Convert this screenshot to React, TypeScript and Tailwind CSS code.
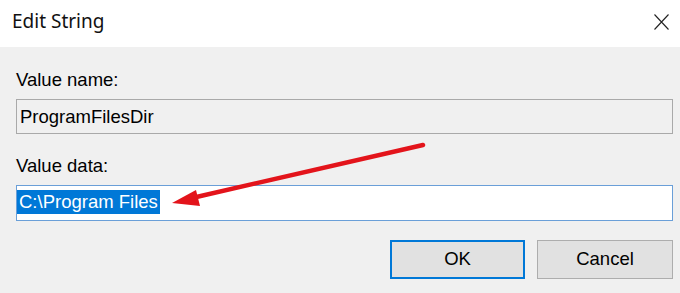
import React from 'react';

export default function App() {
  return (
    <div className="relative w-[680px] h-[293px] overflow-hidden bg-[#f0f0f0] font-['Liberation_Sans',Arial,sans-serif] text-black">
      {/* title bar */}
      <div className="flex items-start justify-between h-[47px] bg-white pl-[12px] pr-[11px]">
        <span className="mt-[8px] text-[19px] leading-[26px] font-['Noto_Sans','Open_Sans',sans-serif] text-[#111]">Edit String</span>
        <svg className="mt-[14px]" width="15" height="16" viewBox="0 0 15 16">
          <path d="M0.5 0.5 L14.5 15.5 M14.5 0.5 L0.5 15.5" stroke="#222" strokeWidth="1.1" fill="none" />
        </svg>
      </div>

      <div className="pl-[16px] pr-[7px] text-[18.5px]">
        <p className="mt-[22px] leading-[21px]">Value name:</p>
        <div className="mt-[9px] h-[35px] border border-[#a9a9a9] bg-[#f0f0f0] flex items-center pl-[3px]">
          <span className="leading-[21px]">ProgramFilesDir</span>
        </div>

        <p className="mt-[21px] leading-[21px]">Value data:</p>
        <div className="mt-[9px] h-[36px] border border-[#6a9fd8] bg-white pt-[2px]">
          <span className="inline-block leading-[24px] bg-[#0078d7] text-white px-[2px]">C:\Program Files</span>
        </div>

        <div className="flex justify-end gap-[12px] mt-[19px]">
          <button className="w-[135px] h-[39px] border-2 border-[#0078d7] bg-[#e1e1e1] text-[18.5px] leading-none">OK</button>
          <button className="w-[136px] h-[39px] border border-[#adadad] bg-[#e1e1e1] text-[18.5px] leading-none">Cancel</button>
        </div>
      </div>

      {/* annotation arrow */}
      <svg className="absolute left-0 top-0 pointer-events-none" width="680" height="293">
        <line x1="423" y1="145" x2="192" y2="198" stroke="#e3141b" strokeWidth="4.5" strokeLinecap="round" />
        <polygon points="172,203 196,190 200,206" fill="#e3141b" />
      </svg>
    </div>
  );
}
